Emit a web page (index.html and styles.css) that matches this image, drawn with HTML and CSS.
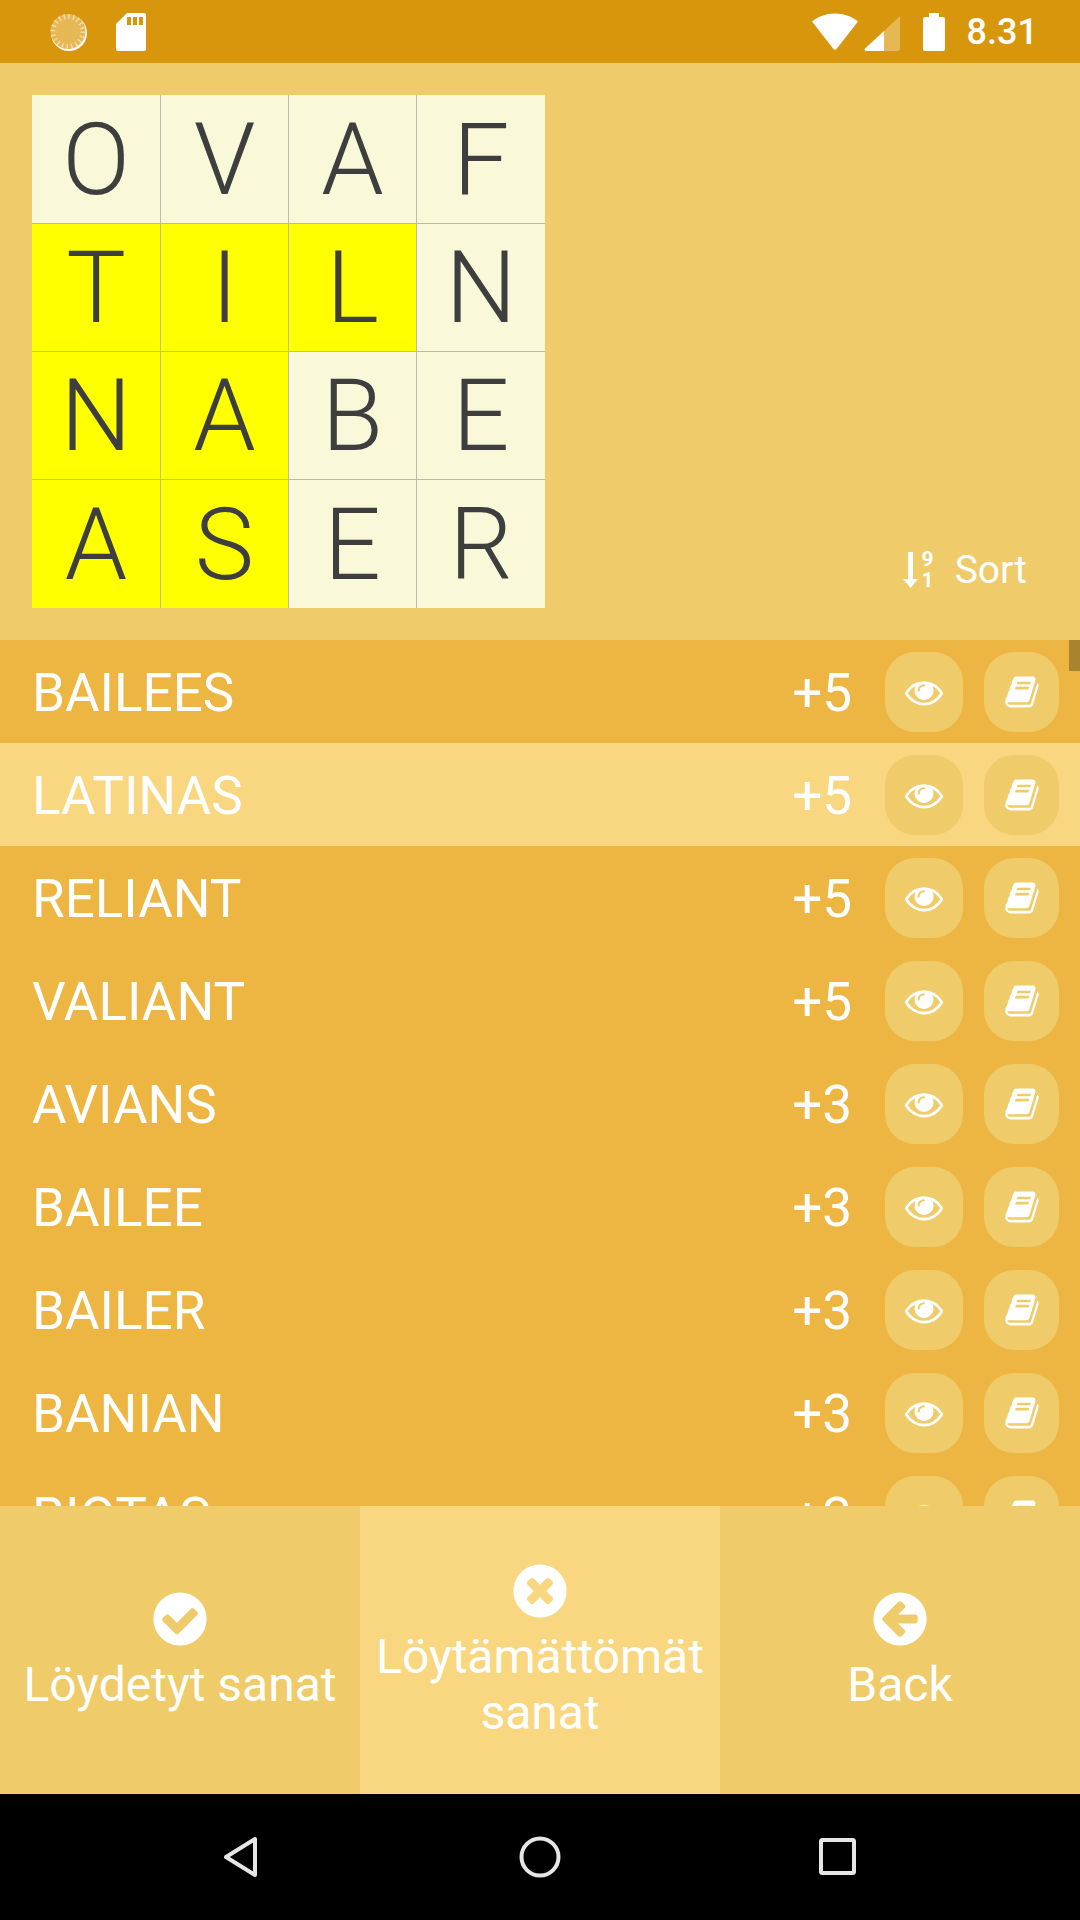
FILE: index.html
```html
<!DOCTYPE html>
<html lang="en">
<head>
    <meta charset="UTF-8">
    <meta name="viewport" content="width=device-width, initial-scale=1.0">
    <title>Word Grid Results</title>
    <link rel="stylesheet" href="styles.css">
</head>
<body>
    <!-- Icon sprite -->
    <svg class="sprite" xmlns="http://www.w3.org/2000/svg">
        <symbol id="i-eye" viewBox="0 0 1792 1792"><path d="M1664 960q-152-236-381-353 61 104 61 225 0 185-131.500 316.500t-316.500 131.500-316.500-131.500-131.500-316.500q0-121 61-225-229 117-381 353 133 205 333.500 326.500t434.500 121.500 434.500-121.500 333.500-326.500zm-720-384q0-20-14-34t-34-14q-125 0-214.500 89.500t-89.500 214.500q0 20 14 34t34 14 34-14 14-34q0-86 61-147t147-61q20 0 34-14t14-34zm848 384q0 34-20 69-140 230-376.500 368.500t-499.500 138.500-499.500-139-376.500-368q-20-35-20-69t20-69q140-229 376.500-368t499.500-139 499.500 139 376.500 368q20 35 20 69z"/></symbol>
        <symbol id="i-book" viewBox="0 0 1792 1792"><path d="M1703 478q40 57 18 129l-275 906q-19 64-76.500 107.500t-122.500 43.500h-923q-77 0-148.500-53.500t-99.500-131.500q-24-67-2-127 0-4 3-27t4-37q1-8-3-21.500t-3-19.500q2-11 8-21t16.500-23.500 16.500-23.500q23-38 45-91.500t30-91.500q3-10 .5-30t-.5-28q3-11 17-28t17-23q21-36 42-92t25-90q1-9-2.500-32t.5-28q4-13 22-30.500t22-22.500q19-26 42.500-84.500t27.500-96.500q1-8-3-25.500t-2-26.500q2-8 9-18t18-23 17-21q8-12 16.500-30.500t15-35 16-36 19.500-32 26.500-23.500 36-11.500 47.500 5.500l-1 3q38-9 51-9h761q74 0 114 56t18 130l-274 906q-36 119-71.500 153.500t-128.500 34.500h-869q-27 0-38 15-11 16-1 43 24 70 144 70h923q29 0 56-15.500t35-41.500l300-987q7-22 5-57 38 15 59 43zm-1064 2q-4 13 2 22.500t20 9.500h608q13 0 25.500-9.500t16.500-22.500l21-64q4-13-2-22.500t-20-9.500h-608q-13 0-25.500 9.500t-16.500 22.500zm-83 256q-4 13 2 22.500t20 9.500h608q13 0 25.500-9.500t16.500-22.500l21-64q4-13-2-22.500t-20-9.500h-608q-13 0-25.500 9.500t-16.500 22.500z"/></symbol>
        <symbol id="i-check" viewBox="0 0 1792 1792"><path d="M1412 734q0-28-18-46l-91-90q-19-19-45-19t-45 19l-408 407-226-226q-19-19-45-19t-45 19l-91 90q-18 18-18 46 0 27 18 45l362 362q19 19 45 19 27 0 46-19l543-543q18-18 18-45zm252 162q0 209-103 385.500t-279.500 279.500-385.500 103-385.500-103-279.500-279.500-103-385.500 103-385.500 279.500-279.500 385.500-103 385.500 103 279.500 279.500 103 385.500z"/></symbol>
        <symbol id="i-times" viewBox="0 0 1792 1792"><path d="M1277 1122q0-26-19-45l-181-181 181-181q19-19 19-45 0-27-19-46l-90-90q-19-19-46-19-26 0-45 19l-181 181-181-181q-19-19-45-19-27 0-46 19l-90 90q-19 19-19 46 0 26 19 45l181 181-181 181q-19 19-19 45 0 27 19 46l90 90q19 19 46 19 26 0 45-19l181-181 181 181q19 19 45 19 27 0 46-19l90-90q19-19 19-46zm387-226q0 209-103 385.500t-279.500 279.500-385.500 103-385.500-103-279.500-279.500-103-385.500 103-385.500 279.500-279.500 385.500-103 385.500 103 279.500 279.500 103 385.500z"/></symbol>
        <symbol id="i-back" viewBox="0 0 1792 1792"><path d="M1408 960v-128q0-26-19-45t-45-19h-502l189-189q19-19 19-45t-19-45l-91-91q-18-18-45-18t-45 18l-362 362-91 91q-18 18-18 45t18 45l91 91 362 362q18 18 45 18t45-18l91-91q18-18 18-45t-18-45l-189-189h502q26 0 45-19t19-45zm256-64q0 209-103 385.500t-279.500 279.500-385.500 103-385.500-103-279.500-279.500-103-385.500 103-385.500 279.500-279.500 385.500-103 385.500 103 279.500 279.500 103 385.500z"/></symbol>
    </svg>

    <div class="app">
        <!-- Status bar -->
        <div class="status-bar">
            <div class="status-left">
                <svg class="icon-sync" viewBox="0 0 38 38">
                    <circle cx="20" cy="20" r="18" fill="#ffffff"/>
                    <circle cx="19" cy="18.500" r="17.500" fill="#e5b755"/>
                    <circle cx="19" cy="18.500" r="15" fill="none" stroke="#f2dca8" stroke-width="5" stroke-dasharray="1.500 3.200"/>
                </svg>
                <svg class="icon-sd" viewBox="0 0 30 38">
                    <path d="M11 0h17a2 2 0 0 1 2 2v34a2 2 0 0 1-2 2H2a2 2 0 0 1-2-2V11z" fill="#ffffff"/>
                    <path d="M11 4h4v8h-4zM17 4h4v8h-4zM23 4h4v8h-4z" fill="#d8960d"/>
                </svg>
            </div>
            <div class="status-right">
                <svg class="icon-wifi" viewBox="0 0 46 38">
                    <path d="M0 8.500C6 3.500 14 .5 23 .5s17 3 23 8L24.500 36a2 2 0 0 1-3 0z" fill="#ffffff"/>
                </svg>
                <svg class="icon-signal" viewBox="0 0 36 36">
                    <path d="M36 1v33a2 2 0 0 1-2 2H20V16z" fill="#e5b755"/>
                    <path d="M20 16v20H2a1.500 1.500 0 0 1-1-2.500z" fill="#ffffff"/>
                </svg>
                <svg class="icon-battery" viewBox="0 0 22 38">
                    <path d="M6 0h10v4h4a2 2 0 0 1 2 2v30a2 2 0 0 1-2 2H2a2 2 0 0 1-2-2V6a2 2 0 0 1 2-2h4z" fill="#ffffff"/>
                </svg>
                <span class="clock">8.31</span>
            </div>
        </div>

        <!-- Letter grid and sort -->
        <div class="board-section">
            <div class="board">
                <div class="cell">O</div><div class="cell">V</div><div class="cell">A</div><div class="cell">F</div>
                <div class="cell hit">T</div><div class="cell hit">I</div><div class="cell hit">L</div><div class="cell">N</div>
                <div class="cell hit">N</div><div class="cell hit">A</div><div class="cell">B</div><div class="cell">E</div>
                <div class="cell hit">A</div><div class="cell hit">S</div><div class="cell">E</div><div class="cell">R</div>
            </div>
            <div class="sort">
                <svg class="icon-sort" viewBox="0 0 15 36">
                    <path d="M5 0h5v27h5L7.500 36 0 27h5z" fill="#ffffff"/>
                </svg>
                <div class="sort-digits"><span>9</span><span>1</span></div>
                <span class="sort-label">Sort</span>
            </div>
        </div>

        <!-- Word list -->
        <div class="word-list">
            <div class="scroll-thumb"></div>
            <div class="word-row"><span class="word">BAILEES</span><span class="score">+5</span><span class="row-btn eye-btn"><svg><use href="#i-eye"/></svg></span><span class="row-btn book-btn"><svg><use href="#i-book"/></svg></span></div>
            <div class="word-row selected"><span class="word">LATINAS</span><span class="score">+5</span><span class="row-btn eye-btn"><svg><use href="#i-eye"/></svg></span><span class="row-btn book-btn"><svg><use href="#i-book"/></svg></span></div>
            <div class="word-row"><span class="word">RELIANT</span><span class="score">+5</span><span class="row-btn eye-btn"><svg><use href="#i-eye"/></svg></span><span class="row-btn book-btn"><svg><use href="#i-book"/></svg></span></div>
            <div class="word-row"><span class="word">VALIANT</span><span class="score">+5</span><span class="row-btn eye-btn"><svg><use href="#i-eye"/></svg></span><span class="row-btn book-btn"><svg><use href="#i-book"/></svg></span></div>
            <div class="word-row"><span class="word">AVIANS</span><span class="score">+3</span><span class="row-btn eye-btn"><svg><use href="#i-eye"/></svg></span><span class="row-btn book-btn"><svg><use href="#i-book"/></svg></span></div>
            <div class="word-row"><span class="word">BAILEE</span><span class="score">+3</span><span class="row-btn eye-btn"><svg><use href="#i-eye"/></svg></span><span class="row-btn book-btn"><svg><use href="#i-book"/></svg></span></div>
            <div class="word-row"><span class="word">BAILER</span><span class="score">+3</span><span class="row-btn eye-btn"><svg><use href="#i-eye"/></svg></span><span class="row-btn book-btn"><svg><use href="#i-book"/></svg></span></div>
            <div class="word-row"><span class="word">BANIAN</span><span class="score">+3</span><span class="row-btn eye-btn"><svg><use href="#i-eye"/></svg></span><span class="row-btn book-btn"><svg><use href="#i-book"/></svg></span></div>
            <div class="word-row"><span class="word">BIOTAS</span><span class="score">+3</span><span class="row-btn eye-btn"><svg><use href="#i-eye"/></svg></span><span class="row-btn book-btn"><svg><use href="#i-book"/></svg></span></div>
        </div>

        <!-- Bottom tabs -->
        <div class="tabs">
            <div class="tab"><svg class="tab-icon"><use href="#i-check"/></svg><span>Löydetyt sanat</span></div>
            <div class="tab active"><svg class="tab-icon"><use href="#i-times"/></svg><span>Löytämättömät sanat</span></div>
            <div class="tab"><svg class="tab-icon"><use href="#i-back"/></svg><span>Back</span></div>
        </div>

        <!-- Navigation bar -->
        <div class="nav-bar">
            <svg class="nav-icon" viewBox="0 0 44 44"><path d="M35 4v36L6 22z" fill="none" stroke="#e6e6e6" stroke-width="4" stroke-linejoin="round"/></svg>
            <svg class="nav-icon" viewBox="0 0 44 44"><circle cx="22" cy="22" r="18.500" fill="none" stroke="#e6e6e6" stroke-width="4"/></svg>
            <svg class="nav-icon" viewBox="0 0 44 44"><rect x="5" y="5" width="33" height="33" rx="1.500" fill="none" stroke="#e6e6e6" stroke-width="4"/></svg>
        </div>
    </div>
</body>
</html>
```

FILE: styles.css
```css
/* Reset styles */
* {
    margin: 0;
    padding: 0;
    box-sizing: border-box;
    font-family: Roboto, "Liberation Sans", sans-serif;
}

body {
    width: 1080px;
    height: 1920px;
    overflow: hidden;
    background-color: #000000;
}

.sprite {
    display: none;
}

.app {
    display: flex;
    flex-direction: column;
    height: 1920px;
    color: #ffffff;
    fill: #ffffff;
}

/* Status bar */
.status-bar {
    display: flex;
    justify-content: space-between;
    align-items: center;
    height: 63px;
    padding: 0 42px 0 49px;
    background-color: #d8960d;
}

.status-left,
.status-right {
    display: flex;
    align-items: center;
}

.icon-sync {
    width: 38px;
    height: 38px;
    margin-right: 29px;
}

.icon-sd {
    width: 30px;
    height: 38px;
}

.icon-wifi {
    width: 46px;
    height: 38px;
    margin-right: 6px;
}

.icon-signal {
    width: 36px;
    height: 36px;
    margin-top: 2px;
    margin-right: 23px;
}

.icon-battery {
    width: 22px;
    height: 38px;
    margin-right: 22px;
}

.clock {
    font-size: 36px;
    font-weight: 500;
}

/* Grid section */
.board-section {
    display: flex;
    justify-content: space-between;
    align-items: flex-end;
    height: 577px;
    padding: 32px 53px 32px 32px;
    background-color: #efcb69;
}

.board {
    display: grid;
    grid-template-columns: 128px 128px 128px 129px;
    grid-template-rows: 128px 128px 128px 129px;
    background-color: #f9f8d9;
}

.cell {
    display: flex;
    justify-content: center;
    align-items: center;
    font-size: 100px;
    font-weight: 300;
    color: #3e3e3e;
    background-color: #f9f8d9;
    border-left: 1px solid #bdbba8;
    border-top: 1px solid #bdbba8;
}

.cell:nth-child(4n+1) {
    border-left: none;
}

.cell:nth-child(-n+4) {
    border-top: none;
}

.cell.hit {
    background-color: #ffff00;
}

.sort {
    display: flex;
    align-items: center;
    margin-bottom: 15px;
}

.icon-sort {
    width: 15px;
    height: 36px;
}

.sort-digits {
    display: flex;
    flex-direction: column;
    margin-left: 4px;
    font-size: 21px;
    font-weight: 700;
    line-height: 21px;
}

.sort-label {
    margin-left: 21px;
    font-size: 39px;
}

/* Word list */
.word-list {
    position: relative;
    height: 866px;
    overflow: hidden;
    background-color: #edb643;
}

.scroll-thumb {
    position: absolute;
    top: 0;
    right: 0;
    width: 11px;
    height: 31px;
    background-color: #aa832f;
}

.word-row {
    display: flex;
    align-items: center;
    flex-shrink: 0;
    height: 103px;
    padding: 0 21px 0 32px;
    font-size: 53px;
}

.word-row.selected {
    background-color: #f8d780;
}

.word {
    flex: 1;
    margin-top: 3px;
}

.score {
    margin-top: 3px;
    margin-right: 33px;
}

.row-btn {
    display: flex;
    justify-content: center;
    align-items: center;
    height: 80px;
    border-radius: 30px;
    background-color: #efcb69;
}

.eye-btn svg {
    width: 38px;
    height: 38px;
}

.book-btn svg {
    width: 36px;
    height: 36px;
}

.eye-btn {
    width: 78px;
    margin-right: 21px;
}

.book-btn {
    width: 75px;
}

/* Bottom tabs */
.tabs {
    display: flex;
    height: 288px;
}

.tab {
    display: flex;
    flex-direction: column;
    justify-content: center;
    align-items: center;
    width: 360px;
    padding: 0 10px;
    font-size: 48px;
    line-height: 56px;
    text-align: center;
    background-color: #efcb69;
}

.tab.active {
    background-color: #f8d780;
}

.tab-icon {
    width: 62px;
    height: 62px;
    margin-bottom: 7px;
}

/* Navigation bar */
.nav-bar {
    display: flex;
    justify-content: center;
    align-items: center;
    gap: 254px;
    height: 126px;
    background-color: #000000;
}

.nav-icon {
    width: 44px;
    height: 44px;
}
```
